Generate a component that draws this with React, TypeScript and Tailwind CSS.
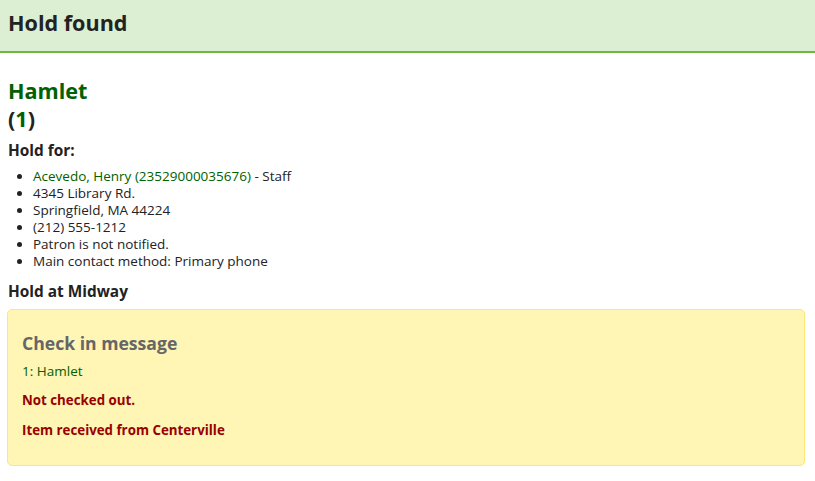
export default function App() {
  const details = [
    "4345 Library Rd.",
    "Springfield, MA 44224",
    "(212) 555-1212",
    "Patron is not notified.",
    "Main contact method: Primary phone",
  ];
  return (
    <div className="min-h-[481px] bg-white text-[#222] font-['Open_Sans',sans-serif]">
      <div className="h-[53px] bg-[#dcefd3] border-b-2 border-[#6cb93f] px-2 pt-[9px]">
        <h1 className="text-[21.6px] font-bold leading-[28px] text-[#222]">Hold found</h1>
      </div>
      <div className="px-2 pt-[24px]">
        <h2 className="text-[21.6px] font-bold leading-[28px] text-[#006100]">Hamlet</h2>
        <div className="text-[21.6px] font-bold leading-[27px]">
          <span className="text-[#222]">(</span>
          <span className="text-[#006100]">1</span>
          <span className="text-[#222]">)</span>
        </div>
        <h3 className="mt-[9px] text-[15.4px] font-bold leading-[20px]">Hold for:</h3>
        <ul className="mt-[7px] pl-[25px] list-disc text-[13.5px] leading-[17px]">
          <li>
            <span className="text-[#006100]">Acevedo, Henry (23529000035676)</span> - Staff
          </li>
          {details.map((d) => (
            <li key={d}>{d}</li>
          ))}
        </ul>
        <h3 className="mt-[12px] text-[15.4px] font-bold leading-[20px]">Hold at Midway</h3>
        <div className="mt-[7px] mr-[2px] -ml-px h-[157px] bg-[#fff5b5] border border-[#fbe77a] rounded-[5px] px-[14px] pt-[20px]">
          <h4 className="text-[17.6px] font-bold leading-[26px] text-[#666]">Check in message</h4>
          <p className="mt-[6px] text-[13.5px] leading-[18px] text-[#006100]">1: Hamlet</p>
          <p className="mt-[11px] text-[13.3px] font-bold leading-[18px] text-[#990000]">Not checked out.</p>
          <p className="mt-[12px] text-[13.3px] font-bold leading-[18px] text-[#990000]">Item received from Centerville</p>
        </div>
      </div>
    </div>
  );
}
